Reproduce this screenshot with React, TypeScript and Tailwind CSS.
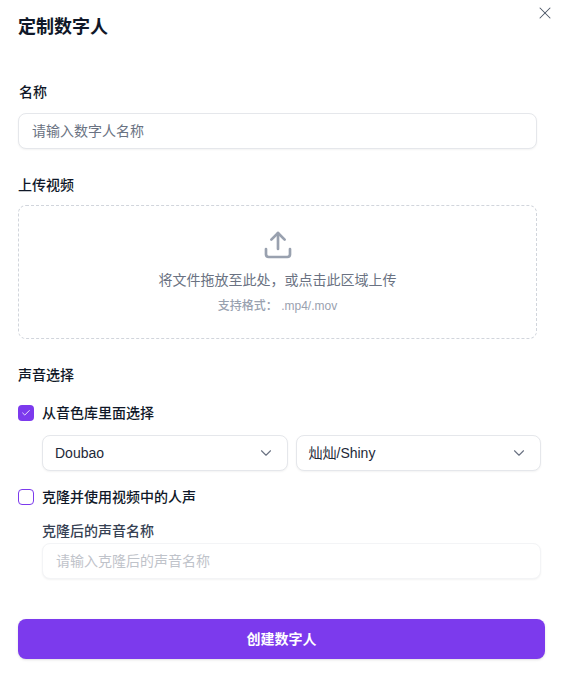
import { X, Upload, ChevronDown, Check } from 'lucide-react'

function Select({ value }: { value: string }) {
  return (
    <div className="flex-1 h-9 flex items-center justify-between pl-[12px] pr-[12px] bg-white border border-gray-200 rounded-lg shadow-xs text-sm text-gray-800">
      <span>{value}</span>
      <ChevronDown className="w-[18px] h-[18px] text-gray-500" strokeWidth={1.5} />
    </div>
  )
}

export default function App() {
  return (
    <div className="relative w-[562px] h-[673px] bg-white overflow-hidden pl-[18px] font-['Liberation_Sans','Noto_Sans_CJK_SC',sans-serif]">
      <button className="absolute right-[7px] top-[3px] text-gray-600">
        <X className="w-5 h-5" strokeWidth={1.25} />
      </button>

      {/* Header */}
      <h2 className="pt-[13px] text-lg leading-[28px] font-semibold text-gray-900">定制数字人</h2>

      {/* Name */}
      <label className="block mt-[41px] pl-px text-sm leading-5 font-medium text-gray-900">名称</label>
      <div className="mt-[11px] w-[519px] h-9 flex items-center px-[13px] bg-white border border-gray-200 rounded-lg shadow-xs text-sm text-gray-500">
        请输入数字人名称
      </div>

      {/* Upload */}
      <label className="block mt-[26px] text-sm leading-5 font-medium text-gray-900">上传视频</label>
      <div className="mt-[10px] w-[519px] h-[134px] flex flex-col items-center pt-[23px] border border-dashed border-gray-300 rounded-lg">
        <Upload className="w-8 h-8 text-gray-400" strokeWidth={2} />
        <p className="mt-[9px] text-sm leading-5 text-gray-500">将文件拖放至此处，或点击此区域上传</p>
        <p className="mt-[8px] text-xs leading-4 font-medium text-gray-400">支持格式： .mp4/.mov</p>
      </div>

      {/* Voice */}
      <label className="block mt-[26px] text-sm leading-5 font-medium text-gray-900">声音选择</label>
      <div className="mt-[18px] flex items-center gap-2 h-5">
        <span className="w-4 h-4 rounded flex items-center justify-center bg-[#7c3aed]">
          <Check className="w-[10px] h-[10px] text-white" strokeWidth={2} />
        </span>
        <span className="text-sm font-medium text-gray-900">从音色库里面选择</span>
      </div>
      <div className="mt-3 ml-6 w-[499px] flex gap-2">
        <Select value="Doubao" />
        <Select value="灿灿/Shiny" />
      </div>

      <div className="mt-4 flex items-center gap-2 h-5">
        <span className="w-4 h-4 rounded border border-[#7c3aed] bg-white" />
        <span className="text-sm font-medium text-gray-900">克隆并使用视频中的人声</span>
      </div>
      <label className="block mt-[14px] ml-6 text-sm leading-5 font-medium text-gray-700">克隆后的声音名称</label>
      <div className="mt-[2px] ml-6 w-[499px] h-9 flex items-center px-[13px] bg-white border border-gray-100 rounded-lg shadow-xs text-sm text-[#bfc3ca]">
        请输入克隆后的声音名称
      </div>

      {/* Submit */}
      <button className="mt-10 w-[527px] h-10 rounded-lg bg-[#7c3aed] text-white text-sm font-semibold shadow-sm">
        创建数字人
      </button>
    </div>
  )
}
